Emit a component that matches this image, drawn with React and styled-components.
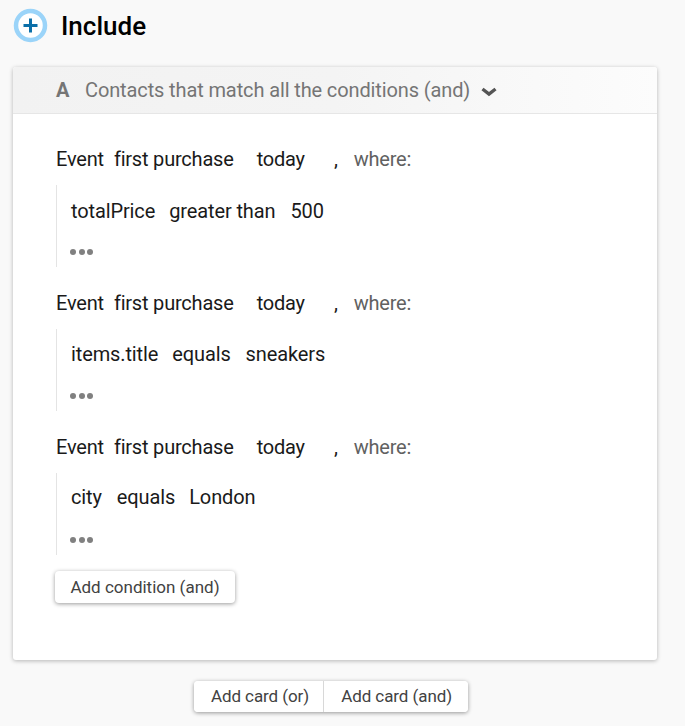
import React from 'react';
import styled, { createGlobalStyle } from 'styled-components';

const GlobalStyle = createGlobalStyle`
  html, body {
    margin: 0;
    padding: 0;
    background: #f9f9f9;
  }
  body {
    font-family: Roboto, "Liberation Sans", sans-serif;
    color: #212121;
  }
`;

const Page = styled.div`
  width: 685px;
  height: 726px;
  overflow: hidden;
  box-sizing: border-box;
  padding: 9px 28px 0 13px;
`;

const Heading = styled.div`
  display: flex;
  align-items: center;
  height: 34px;
`;

const PlusIcon = styled.svg`
  width: 35px;
  height: 35px;
  flex: none;
  margin-bottom: 2px;
`;

const Title = styled.h1`
  margin: 0 0 0 13px;
  font-size: 26px;
  font-weight: 500;
  color: #000;
`;

const Card = styled.div`
  margin-top: 24px;
  height: 593px;
  background: #fff;
  border-radius: 3px;
  box-shadow: 0 1px 4px rgba(0, 0, 0, 0.28);
  overflow: hidden;
`;

const CardHeader = styled.div`
  display: flex;
  align-items: center;
  height: 46px;
  padding-left: 43px;
  background: linear-gradient(90deg, #f2f2f2 0%, #f4f4f4 50%, #fcfcfc 100%);
  border-bottom: 1px solid #e6e6e6;
  color: #757575;
`;

const Letter = styled.span`
  font-size: 20px;
  font-weight: 700;
  width: 29px;
`;

const HeaderText = styled.span`
  font-size: 20px;
  letter-spacing: -0.12px;
`;

const Chevron = styled.svg`
  width: 16px;
  height: 10px;
  margin-left: 11px;
  margin-top: 3px;
`;

const CardBody = styled.div`
  padding: 32px 43px 0;
`;

const EventRow = styled.div`
  display: flex;
  height: 26px;
  align-items: center;
  font-size: 20px;
  letter-spacing: -0.2px;
  color: #1a1a1a;
`;

const Token = styled.span`
  margin-left: ${(props) => props.$gap || 0}px;
  color: ${(props) => props.$muted ? '#616161' : 'inherit'};
`;

const Where = styled.div`
  display: flex;
  flex-direction: column;
  margin: 13px 0 0;
  height: 82px;
  padding: ${(props) => props.$top}px 0 12px 14px;
  box-sizing: border-box;
  border-left: 1px solid #e4e4e4;
`;

const Filter = styled(EventRow)`
  letter-spacing: -0.12px;
`;

const Dots = styled.div`
  display: flex;
  gap: 2.5px;
  margin: auto 0 0 -1px;
`;

const Dot = styled.span`
  width: 6px;
  height: 6px;
  border-radius: 50%;
  background: #808080;
`;

const Group = styled.div`
  margin-bottom: 23px;
  &:last-of-type {
    margin-bottom: 0;
  }
`;

const Button = styled.button`
  height: 32px;
  padding: 0 16px;
  border: none;
  background: #fff;
  font: 400 17px Roboto, sans-serif;
  color: #424242;
`;

const AddCondition = styled(Button)`
  display: block;
  margin: 16px 0 0 -1px;
  width: 180px;
  padding: 0;
  text-align: center;
  border-radius: 4px;
  box-shadow: 0 1px 4px rgba(0, 0, 0, 0.4);
`;

const CardActions = styled.div`
  display: flex;
  justify-content: center;
  margin-top: 21px;
  padding-right: 8px;
`;

const ActionGroup = styled.div`
  display: flex;
  border-radius: 4px;
  overflow: hidden;
  box-shadow: 0 1px 4px rgba(0, 0, 0, 0.4);
`;

const ActionButton = styled(Button)`
  height: 31px;
  padding: 0 14px 2px 17px;
  letter-spacing: -0.08px;
  & + & {
    padding-right: 16px;
    border-left: 1px solid #d8d8d8;
  }
`;

const groups = [
  { top: 13, filter: [['totalPrice', 0], ['greater than', 14], ['500', 15]] },
  { top: 12, filter: [['items.title', 0], ['equals', 14], ['sneakers', 15]] },
  { top: 11, filter: [['city', 0], ['equals', 15], ['London', 14]] },
];

export default function App() {
  return (
    <Page>
      <GlobalStyle />
      <Heading>
        <PlusIcon viewBox="0 0 35 35">
          <circle cx="17.5" cy="17.5" r="14.5" fill="#fff" stroke="#9bd4f9" strokeWidth="4.5" />
          <path d="M17.5 10.5v14M10.5 17.5h14" stroke="#0b6fa8" strokeWidth="3" fill="none" />
        </PlusIcon>
        <Title>Include</Title>
      </Heading>
      <Card>
        <CardHeader>
          <Letter>A</Letter>
          <HeaderText>Contacts that match all the conditions (and)</HeaderText>
          <Chevron viewBox="0 0 16 10">
            <path d="M1.5 2l6.5 5 6.5-5" stroke="#555" strokeWidth="3.4" fill="none" />
          </Chevron>
        </CardHeader>
        <CardBody>
          {groups.map((group, i) => (
            <Group key={i}>
              <EventRow>
                <Token>Event</Token>
                <Token $gap={10}>first purchase</Token>
                <Token $gap={23}>today</Token>
                <Token $gap={29}>,</Token>
                <Token $gap={16} $muted>where:</Token>
              </EventRow>
              <Where $top={group.top}>
                <Filter>
                  {group.filter.map(([text, gap]) => (
                    <Token key={text} $gap={gap}>{text}</Token>
                  ))}
                </Filter>
                <Dots>
                  <Dot />
                  <Dot />
                  <Dot />
                </Dots>
              </Where>
            </Group>
          ))}
          <AddCondition>Add condition (and)</AddCondition>
        </CardBody>
      </Card>
      <CardActions>
        <ActionGroup>
          <ActionButton>Add card (or)</ActionButton>
          <ActionButton>Add card (and)</ActionButton>
        </ActionGroup>
      </CardActions>
    </Page>
  );
}
